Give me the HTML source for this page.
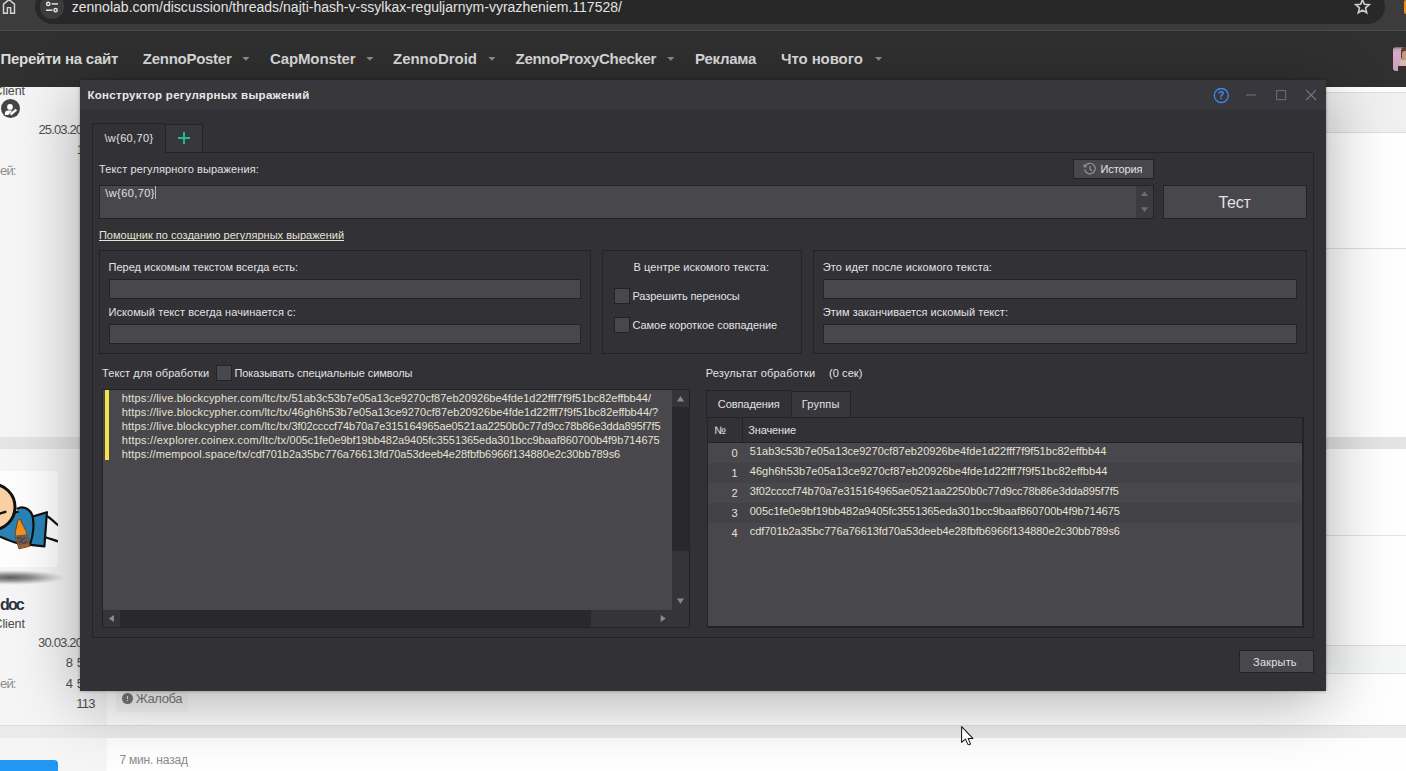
<!DOCTYPE html>
<html lang="ru">
<head>
<meta charset="utf-8">
<title>Конструктор регулярных выражений</title>
<style>
*{box-sizing:border-box;margin:0;padding:0}
html,body{width:1406px;height:771px;overflow:hidden;background:#fefefe}
body{position:relative;font-family:'Liberation Sans',sans-serif}
.a{position:absolute}
.t{position:absolute;white-space:pre;font-family:'Liberation Sans',sans-serif}
.b{position:absolute;border:1px solid #232226}
.f{position:absolute;border:1px solid #232226;background:#48474c}
svg{position:absolute;overflow:visible}
</style>
</head>
<body>

<!-- ================= page behind ================= -->
<div class="a" style="left:0;top:87px;width:107px;height:684px;background:#f5f5f5"></div>
<!-- right strip post header -->
<div class="a" style="left:1300px;top:92px;width:106px;height:41px;background:#f0f0f0;border-top:1px solid #dcdcdc;border-bottom:1px solid #dcdcdc"></div>
<div class="a" style="left:1300px;top:248px;width:106px;height:1px;background:#dedede"></div>
<div class="a" style="left:1300px;top:535px;width:106px;height:1px;background:#e2e2e2"></div>
<div class="a" style="left:1300px;top:645px;width:106px;height:29px;background:#f5f7f6;border-top:1px solid #dfdfdf;border-bottom:1px solid #dfdfdf"></div>
<!-- separator bands -->
<div class="a" style="left:0;top:437px;width:1406px;height:12px;background:#e4e4e4"></div>
<div class="a" style="left:0;top:725px;width:1406px;height:13px;background:#ebebeb;border-top:1px solid #dedede"></div>
<!-- avatar card -->
<div class="a" style="left:-38px;top:471px;width:96px;height:96px;background:#fdfdfd;border-radius:4px"></div>
<div class="a" style="left:-46px;top:570px;width:112px;height:15px;border-radius:50%;background:radial-gradient(ellipse at center,rgba(0,0,0,.62) 0%,rgba(0,0,0,.42) 28%,rgba(0,0,0,.12) 55%,rgba(0,0,0,0) 70%)"></div>
<svg style="left:0;top:471px;overflow:hidden" width="58" height="96" viewBox="0 471 58 96">
  <!-- legs -->
  <path d="M46 515.5C51 518 54 522.5 60 526.5V542C55 540.5 50 538.5 44.5 537Z" fill="#fdfdfd" stroke="#111" stroke-width="2.2"/>
  <!-- shirt -->
  <path d="M-6 520C4 520 10 516 15.5 512.5C18 510.5 24 512 33.4 516.4L46.9 512.2L44.4 546.3L30.3 544.8C22 546 10 541 -6 534Z" fill="#2a82b5" stroke="#111" stroke-width="2.2" stroke-linejoin="round"/>
  <!-- arm -->
  <path d="M17.5 508.6C22 505.6 29 508 32 514.5C34.6 522 33.6 534 30.3 543.5" fill="#2a82b5" stroke="#111" stroke-width="2.2" stroke-linecap="round"/>
  <!-- head -->
  <circle cx="-8" cy="507" r="23" fill="#f9d0a2" stroke="#111" stroke-width="3"/>
  <path d="M-3 514.6L5.4 511.8" stroke="#111" stroke-width="2.4" fill="none" stroke-linecap="round"/>
  <!-- bottle -->
  <path d="M17.6 520L20.6 519.6C21.6 524 26 529 27.3 535L29.6 546.3L19 548.8L15.4 537C14.2 531 17.6 526 17.6 520Z" fill="#f0921f" stroke="#7a4416" stroke-width="1"/>
  <path d="M15.3 535.6L27.4 534.2L29.3 545.8L19.2 548.2Z" fill="#6e5c58"/>
  <path d="M17 538.5L20 537.5L22 540L25 538M18 542.5L21 541L23.5 543.5L27 541.5" stroke="#3a2f2d" stroke-width=".9" fill="none"/>
  <path d="M18.4 545.6L28.8 543.4L29.3 545.8L19.2 548.2Z" fill="#a55f33"/>
</svg>
<!-- user icon -->
<div class="a" style="left:1px;top:98.9px;width:19.2px;height:19.2px;border-radius:50%;background:#444"></div>
<svg style="left:1px;top:98.9px" width="20" height="20" viewBox="0 0 20 20">
  <circle cx="9" cy="7.9" r="2.9" fill="#fff"/>
  <path d="M3.9 16V14.3Q3.9 11.5 7.2 11.5H11.2L7.3 16Z" fill="#fff"/>
  <path d="M9.5 15.5L15.4 10.7" stroke="#fff" stroke-width="2.3" fill="none"/>
</svg>
<!-- complaint icon -->
<div class="a" style="left:116px;top:684px;width:72px;height:28px;border-radius:3px;background:rgba(0,0,0,.022)"></div>
<div class="a" style="left:122.2px;top:693.3px;width:10.4px;height:10.4px;border-radius:50%;background:#7a7a7a"></div>
<div class="a" style="left:126.7px;top:695.5px;width:1.4px;height:3.8px;background:#f4f4f4"></div>
<div class="a" style="left:126.7px;top:700.1px;width:1.4px;height:1.4px;background:#f4f4f4"></div>
<!-- blue button -->
<div class="a" style="left:-10px;top:760px;width:68px;height:30px;border-radius:4px;background:#2196f3"></div>

<!-- ================= browser toolbar ================= -->
<div class="a" style="left:0;top:0;width:1406px;height:31px;background:#3c3c3c;border-bottom:1px solid #4a4a4a"></div>
<div class="a" style="left:35px;top:-11px;width:1350px;height:35px;border-radius:17.5px;background:#282828"></div>
<div class="a" style="left:39.6px;top:-5.8px;width:24.8px;height:24.8px;border-radius:50%;background:#3c3c3c"></div>
<!-- tune icon -->
<svg style="left:45px;top:0" width="14" height="14" viewBox="0 0 14 14" fill="none" stroke="#e3e3e3" stroke-width="1.5">
  <circle cx="3.2" cy="3.9" r="1.6"/><path d="M6.6 3.9H13"/>
  <circle cx="10.6" cy="10.2" r="1.6"/><path d="M1 10.2H7.4"/>
</svg>
<!-- home icon -->
<svg style="left:2px;top:-4px" width="14" height="19" viewBox="0 0 14 19" fill="none" stroke="#d6d6d6" stroke-width="1.45" stroke-linejoin="miter">
  <path d="M1.5 17.2V8.2L7 3.6L12.5 8.2V17.2H8.6V11.6H5.4V17.2Z"/>
</svg>
<!-- star -->
<svg style="left:1353.5px;top:-1.6px" width="17" height="17" viewBox="0 0 24 24" fill="none" stroke="#cdcdcd" stroke-width="2.3" stroke-linejoin="miter">
  <path d="M12 2.6l2.7 6.3 6.8.6-5.2 4.5 1.6 6.7L12 17.1l-5.9 3.6 1.6-6.7L2.5 9.5l6.8-.6z"/>
</svg>
<div class="a" style="left:1404px;top:0;width:4px;height:14px;border-radius:2px;background:#f08a1d"></div>

<!-- ================= site nav ================= -->
<div class="a" style="left:0;top:31px;width:1406px;height:56px;background:#303030"></div>
<svg style="left:0;top:31px" width="1406" height="56" viewBox="0 31 1406 56" fill="#8f8f8f">
  <path d="M242.3 57h7.2l-3.6 3.7z"/><path d="M366.3 57h7.2l-3.6 3.7z"/><path d="M488.3 57h7.2l-3.6 3.7z"/>
  <path d="M667.2 57h7.2l-3.6 3.7z"/><path d="M875 57h7.2l-3.6 3.7z"/>
</svg>
<div class="a" style="left:1392.7px;top:47px;width:16px;height:24px;border-radius:3px;overflow:hidden;background:linear-gradient(180deg,#7a5296 0,#b9a6b0 2px,#d9a9c6 5px,#d4a4c0 14px,#c9a0ba 24px)">
<div class="a" style="left:8px;top:0;width:8px;height:13px;border-radius:4px 0 0 3px;background:#5e3c35"></div>
<div class="a" style="left:9.4px;top:4px;width:7px;height:11px;border-radius:3px 0 0 4px;background:#c4957f"></div>
<div class="a" style="left:7px;top:13px;width:9px;height:7px;border-radius:3px 0 0 0;background:#d6bcae"></div>
<div class="a" style="left:5.4px;top:19px;width:11px;height:5px;background:#3d2a33"></div>
</div>

<span class="t" style="left:71.7px;top:-2.00px;font-size:14px;line-height:18px;color:#e3e3e3;letter-spacing:0.014px;">zennolab.com/discussion/threads/najti-hash-v-ssylkax-reguljarnym-vyrazheniem.117528/</span>
<span class="t" style="left:0.5px;top:49.00px;font-size:15px;line-height:20px;color:#dcdcdc;letter-spacing:-0.273px;font-weight:700;">Перейти на сайт</span>
<span class="t" style="left:142.8px;top:49.00px;font-size:15px;line-height:20px;color:#dcdcdc;letter-spacing:-0.272px;font-weight:700;">ZennoPoster</span>
<span class="t" style="left:270.0px;top:49.00px;font-size:15px;line-height:20px;color:#dcdcdc;letter-spacing:-0.119px;font-weight:700;">CapMonster</span>
<span class="t" style="left:393.0px;top:49.00px;font-size:15px;line-height:20px;color:#dcdcdc;letter-spacing:-0.016px;font-weight:700;">ZennoDroid</span>
<span class="t" style="left:515.6px;top:49.00px;font-size:15px;line-height:20px;color:#dcdcdc;letter-spacing:-0.323px;font-weight:700;">ZennoProxyChecker</span>
<span class="t" style="left:695.0px;top:49.00px;font-size:15px;line-height:20px;color:#dcdcdc;letter-spacing:-0.254px;font-weight:700;">Реклама</span>
<span class="t" style="left:781.0px;top:49.00px;font-size:15px;line-height:20px;color:#dcdcdc;letter-spacing:-0.094px;font-weight:700;">Что нового</span>
<span class="t" style="left:-6.5px;top:83.00px;font-size:12.5px;line-height:16px;color:#4a4a4a;letter-spacing:-0.078px;">Client</span>
<span class="t" style="left:38.4px;top:121.00px;font-size:13px;line-height:17px;color:#505050;letter-spacing:-0.848px;">25.03.2025</span>
<span class="t" style="left:76.8px;top:141.00px;font-size:13px;line-height:17px;color:#505050;letter-spacing:0.366px;">12</span>
<span class="t" style="left:0.0px;top:162.00px;font-size:13px;line-height:17px;color:#8c8c8c;letter-spacing:-0.836px;">ей:</span>
<span class="t" style="left:0.0px;top:594.00px;font-size:16px;line-height:21px;color:#2b3440;letter-spacing:-1.884px;font-weight:700;">doc</span>
<span class="t" style="left:-6.5px;top:616.00px;font-size:12.5px;line-height:16px;color:#4a4a4a;letter-spacing:-0.111px;">Client</span>
<span class="t" style="left:38.0px;top:634.00px;font-size:13px;line-height:17px;color:#505050;letter-spacing:-0.808px;">30.03.2015</span>
<span class="t" style="left:65.7px;top:654.00px;font-size:13px;line-height:17px;color:#505050;letter-spacing:0.074px;">8 5</span>
<span class="t" style="left:0.0px;top:675.00px;font-size:13px;line-height:17px;color:#8c8c8c;letter-spacing:-0.836px;">ей:</span>
<span class="t" style="left:65.7px;top:675.00px;font-size:13px;line-height:17px;color:#505050;letter-spacing:0.074px;">4 5</span>
<span class="t" style="left:76.3px;top:695.00px;font-size:13px;line-height:17px;color:#505050;letter-spacing:-0.811px;">113</span>
<span class="t" style="left:135.8px;top:690.00px;font-size:13px;line-height:17px;color:#7d7d7d;letter-spacing:-0.403px;">Жалоба</span>
<span class="t" style="left:119.4px;top:752.00px;font-size:12px;line-height:16px;color:#8c8c8c;letter-spacing:-0.184px;">7 мин. назад</span>

<!-- ================= dialog ================= -->
<div class="a" style="left:80px;top:80px;width:1246px;height:611px;background:#323136;box-shadow:0 10px 60px rgba(0,0,0,.33),0 0 3px rgba(0,0,0,.35)"></div>
<div class="a" style="left:80px;top:80px;width:1246px;height:30px;background:#38373c"></div>
<!-- title buttons -->
<svg style="left:1210px;top:84px" width="112" height="24" viewBox="1210 84 112 24" fill="none">
  <circle cx="1221.3" cy="95.5" r="7" stroke="#4385f5" stroke-width="1.3"/>
  <text x="1221.3" y="99.3" font-family="'Liberation Sans',sans-serif" font-size="10.5" font-weight="700" fill="#4385f5" text-anchor="middle">?</text>
  <path d="M1246 95h10" stroke="#5d6880" stroke-width="1.2"/>
  <rect x="1276.6" y="90.6" width="9" height="9" stroke="#5d6880" stroke-width="1.2"/>
  <path d="M1306.2 90.2l9.8 9.8M1316 90.2l-9.8 9.8" stroke="#6d7a98" stroke-width="1.1"/>
</svg>

<!-- main panel + tabs -->
<div class="b" style="left:92px;top:152px;width:1222px;height:486px"></div>
<div class="b" style="left:165px;top:124px;width:38px;height:29px;background:#38373c"></div>
<div class="b" style="left:92px;top:123px;width:74px;height:30px;border-bottom:none;background:#323136"></div>
<div class="a" style="left:178px;top:137px;width:12.2px;height:2px;background:#25b89a"></div>
<div class="a" style="left:183px;top:132px;width:2px;height:12.2px;background:#25b89a"></div>

<!-- history button -->
<div class="f" style="left:1073px;top:159px;width:81px;height:20px"></div>
<svg style="left:1083px;top:162.4px" width="14" height="14" viewBox="0 0 14 14" fill="none" stroke="#9a999f" stroke-width="1.1">
  <path d="M2.2 4.2A5.3 5.3 0 1 1 1.7 7.4"/>
  <path d="M1.2 2.2v2.6h2.6" />
  <path d="M7 4v3.3l2 1.4"/>
</svg>

<!-- regex input -->
<div class="f" style="left:99px;top:185px;width:1055px;height:34px"></div>
<div class="a" style="left:1136px;top:186px;width:17px;height:32px;background:#3c3b40"></div>
<svg style="left:1136px;top:186px" width="17" height="32" viewBox="1136 186 17 32" fill="#6e6d73">
  <path d="M1141 196.1h7l-3.5-4.9z"/><path d="M1141 207.2h7l-3.5 4.9z"/>
</svg>
<div class="a" style="left:155px;top:186px;width:1px;height:13px;background:#b8b8b8"></div>
<div class="a" style="left:99px;top:240px;width:245px;height:1px;background:#e6e3d3"></div>
<!-- test button -->
<div class="f" style="left:1163px;top:185px;width:144px;height:34px"></div>

<!-- group boxes -->
<div class="b" style="left:99px;top:250px;width:492px;height:104px"></div>
<div class="b" style="left:602px;top:250px;width:200px;height:104px"></div>
<div class="b" style="left:813px;top:250px;width:494px;height:104px"></div>
<div class="f" style="left:109px;top:279px;width:472px;height:20px"></div>
<div class="f" style="left:109px;top:324px;width:472px;height:20px"></div>
<div class="f" style="left:823px;top:279px;width:474px;height:20px"></div>
<div class="f" style="left:823px;top:324px;width:474px;height:20px"></div>
<div class="f" style="left:614px;top:288px;width:16px;height:16px"></div>
<div class="f" style="left:614px;top:317px;width:16px;height:16px"></div>
<div class="f" style="left:216px;top:365px;width:16px;height:16px"></div>

<!-- text area -->
<div class="f" style="left:102px;top:389px;width:588px;height:239px"></div>
<div class="a" style="left:105px;top:390px;width:4px;height:70px;background:#f6e24b"></div>
<!-- v scrollbar -->
<div class="a" style="left:672px;top:390px;width:17px;height:237px;background:#353439"></div>
<div class="a" style="left:672px;top:407px;width:17px;height:144px;background:#29282c"></div>
<!-- h scrollbar -->
<div class="a" style="left:103px;top:610px;width:569px;height:17px;background:#353439"></div>
<div class="a" style="left:120px;top:610px;width:471px;height:17px;background:#29282c"></div>
<svg style="left:102px;top:389px" width="588" height="239" viewBox="102 389 588 239" fill="#8a8990">
  <path d="M677 401.4h7l-3.5-5.4z"/>
  <path d="M677 598.4h7l-3.5 5.4z"/>
  <path d="M114 615v7l-5.2-3.5z"/>
  <path d="M660.6 615v7l5.2-3.5z"/>
</svg>

<!-- results -->
<div class="b" style="left:791px;top:391px;width:60px;height:27px;background:#38373c"></div>
<div class="b" style="left:706px;top:390px;width:86px;height:28px;border-bottom:none;background:#323136"></div>
<div class="f" style="left:707px;top:417px;width:597px;height:211px;border-right-width:2px;border-bottom-width:2px"></div>
<div class="a" style="left:708px;top:418px;width:594px;height:25px;background:#323136;border-bottom:1px solid #232226"></div>
<div class="a" style="left:742px;top:418px;width:1px;height:25px;background:#232226"></div>
<div class="a" style="left:708px;top:463px;width:594px;height:20px;background:#434247"></div>
<div class="a" style="left:708px;top:503px;width:594px;height:20px;background:#434247"></div>

<!-- close button -->
<div class="f" style="left:1239px;top:650px;width:75px;height:23px"></div>

<span class="t" style="left:87.4px;top:88.00px;font-size:11.5px;line-height:15px;color:#e8e8e8;letter-spacing:0.306px;font-weight:700;">Конструктор регулярных выражений</span>
<span class="t" style="left:104.4px;top:131.00px;font-size:11px;line-height:14px;color:#e2e2e4;letter-spacing:0.358px;">\w{60,70}</span>
<span class="t" style="left:99.0px;top:162.00px;font-size:11px;line-height:14px;color:#e2e2e4;letter-spacing:0.122px;">Текст регулярного выражения:</span>
<span class="t" style="left:1100.5px;top:162.00px;font-size:11px;line-height:14px;color:#e2e2e4;letter-spacing:-0.096px;">История</span>
<span class="t" style="left:105.2px;top:186.00px;font-size:11px;line-height:14px;color:#e2e2e4;letter-spacing:0.425px;">\w{60,70}</span>
<span class="t" style="left:1218.5px;top:192.00px;font-size:16px;line-height:21px;color:#e2e2e4;letter-spacing:-0.277px;">Тест</span>
<span class="t" style="left:98.9px;top:228.00px;font-size:11px;line-height:14px;color:#e6e3d3;letter-spacing:0.009px;">Помощник по созданию регулярных выражений</span>
<span class="t" style="left:108.5px;top:260.00px;font-size:11px;line-height:14px;color:#e2e2e4;letter-spacing:0.006px;">Перед искомым текстом всегда есть:</span>
<span class="t" style="left:108.5px;top:305.00px;font-size:11px;line-height:14px;color:#e2e2e4;letter-spacing:0.07px;">Искомый текст всегда начинается с:</span>
<span class="t" style="left:633.6px;top:260.00px;font-size:11px;line-height:14px;color:#e2e2e4;letter-spacing:0.057px;">В центре искомого текста:</span>
<span class="t" style="left:632.5px;top:289.00px;font-size:11px;line-height:14px;color:#e2e2e4;letter-spacing:-0.103px;">Разрешить переносы</span>
<span class="t" style="left:632.5px;top:318.00px;font-size:11px;line-height:14px;color:#e2e2e4;letter-spacing:-0.048px;">Самое короткое совпадение</span>
<span class="t" style="left:822.8px;top:260.00px;font-size:11px;line-height:14px;color:#e2e2e4;letter-spacing:0.089px;">Это идет после искомого текста:</span>
<span class="t" style="left:822.8px;top:305.00px;font-size:11px;line-height:14px;color:#e2e2e4;letter-spacing:0.038px;">Этим заканчивается искомый текст:</span>
<span class="t" style="left:102.0px;top:366.00px;font-size:11px;line-height:14px;color:#e2e2e4;letter-spacing:0.093px;">Текст для обработки</span>
<span class="t" style="left:234.4px;top:366.00px;font-size:11px;line-height:14px;color:#e2e2e4;letter-spacing:-0.067px;">Показывать специальные символы</span>
<span class="t" style="left:705.7px;top:366.00px;font-size:11px;line-height:14px;color:#e2e2e4;letter-spacing:0.194px;">Результат обработки</span>
<span class="t" style="left:829.0px;top:366.00px;font-size:11px;line-height:14px;color:#e2e2e4;letter-spacing:0.08px;">(0 сек)</span>
<span class="t" style="left:121.8px;top:391.00px;font-size:11px;line-height:14px;color:#e6e3d3;letter-spacing:0.177px;">https://live.blockcypher.com/ltc/tx/</span>
<span class="t" style="left:291.4px;top:391.00px;font-size:11px;line-height:14px;color:#e6e3d3;letter-spacing:0.029px;">51ab3c53b7e05a13ce9270cf87eb20926be4fde1d22fff7f9f51bc82effbb44</span>
<span class="t" style="left:648.0px;top:391.00px;font-size:11px;line-height:14px;color:#e6e3d3;letter-spacing:1.037px;">/</span>
<span class="t" style="left:121.8px;top:405.00px;font-size:11px;line-height:14px;color:#e6e3d3;letter-spacing:0.177px;">https://live.blockcypher.com/ltc/tx/</span>
<span class="t" style="left:291.4px;top:405.00px;font-size:11px;line-height:14px;color:#e6e3d3;letter-spacing:0.036px;">46gh6h53b7e05a13ce9270cf87eb20926be4fde1d22fff7f9f51bc82effbb44</span>
<span class="t" style="left:649.1px;top:405.00px;font-size:11px;line-height:14px;color:#e6e3d3;letter-spacing:-0.144px;">/?</span>
<span class="t" style="left:121.8px;top:419.00px;font-size:11px;line-height:14px;color:#e6e3d3;letter-spacing:0.177px;">https://live.blockcypher.com/ltc/tx/</span>
<span class="t" style="left:291.4px;top:419.00px;font-size:11px;line-height:14px;color:#e6e3d3;letter-spacing:-0.09px;">3f02ccccf74b70a7e315164965ae0521aa2250b0c77d9cc78b86e3dda895f7f5</span>
<span class="t" style="left:121.8px;top:433.00px;font-size:11px;line-height:14px;color:#e6e3d3;letter-spacing:0.235px;">https://explorer.coinex.com/ltc/tx/</span>
<span class="t" style="left:289.6px;top:433.00px;font-size:11px;line-height:14px;color:#e6e3d3;letter-spacing:-0.059px;">005c1fe0e9bf19bb482a9405fc3551365eda301bcc9baaf860700b4f9b714675</span>
<span class="t" style="left:121.8px;top:447.00px;font-size:11px;line-height:14px;color:#e6e3d3;letter-spacing:0.122px;">https://mempool.space/tx/</span>
<span class="t" style="left:250.2px;top:447.00px;font-size:11px;line-height:14px;color:#e6e3d3;letter-spacing:-0.059px;">cdf701b2a35bc776a76613fd70a53deeb4e28fbfb6966f134880e2c30bb789s6</span>
<span class="t" style="left:717.8px;top:397.00px;font-size:11px;line-height:14px;color:#e2e2e4;letter-spacing:-0.08px;">Совпадения</span>
<span class="t" style="left:801.7px;top:397.00px;font-size:11px;line-height:14px;color:#e2e2e4;letter-spacing:0.224px;">Группы</span>
<span class="t" style="left:714.2px;top:423.00px;font-size:11px;line-height:14px;color:#e2e2e4;letter-spacing:0.987px;">№</span>
<span class="t" style="left:748.3px;top:423.00px;font-size:11px;line-height:14px;color:#e2e2e4;letter-spacing:-0.135px;">Значение</span>
<span class="t" style="left:731.6px;top:446.00px;font-size:11px;line-height:14px;color:#e6e3d3;letter-spacing:0.175px;">0</span>
<span class="t" style="left:749.8px;top:444.00px;font-size:11px;line-height:14px;color:#e6e3d3;letter-spacing:0.029px;">51ab3c53b7e05a13ce9270cf87eb20926be4fde1d22fff7f9f51bc82effbb44</span>
<span class="t" style="left:731.6px;top:466.00px;font-size:11px;line-height:14px;color:#e6e3d3;letter-spacing:0.175px;">1</span>
<span class="t" style="left:749.8px;top:464.00px;font-size:11px;line-height:14px;color:#e6e3d3;letter-spacing:0.036px;">46gh6h53b7e05a13ce9270cf87eb20926be4fde1d22fff7f9f51bc82effbb44</span>
<span class="t" style="left:731.6px;top:486.00px;font-size:11px;line-height:14px;color:#e6e3d3;letter-spacing:0.175px;">2</span>
<span class="t" style="left:749.8px;top:484.00px;font-size:11px;line-height:14px;color:#e6e3d3;letter-spacing:-0.093px;">3f02ccccf74b70a7e315164965ae0521aa2250b0c77d9cc78b86e3dda895f7f5</span>
<span class="t" style="left:731.6px;top:506.00px;font-size:11px;line-height:14px;color:#e6e3d3;letter-spacing:0.175px;">3</span>
<span class="t" style="left:749.8px;top:504.00px;font-size:11px;line-height:14px;color:#e6e3d3;letter-spacing:-0.057px;">005c1fe0e9bf19bb482a9405fc3551365eda301bcc9baaf860700b4f9b714675</span>
<span class="t" style="left:731.6px;top:526.00px;font-size:11px;line-height:14px;color:#e6e3d3;letter-spacing:0.175px;">4</span>
<span class="t" style="left:749.8px;top:524.00px;font-size:11px;line-height:14px;color:#e6e3d3;letter-spacing:-0.057px;">cdf701b2a35bc776a76613fd70a53deeb4e28fbfb6966f134880e2c30bb789s6</span>
<span class="t" style="left:1253.1px;top:655.00px;font-size:11px;line-height:14px;color:#e2e2e4;letter-spacing:0.189px;">Закрыть</span>

<!-- mouse cursor -->
<svg style="left:955px;top:720px" width="24" height="30" viewBox="955 720 24 30">
  <path d="M961.6 726.6V742.3L965.4 739.1L967.9 744.4Q969.3 745.2 970.5 743.9L968.1 738.4H972.9Z" fill="#fff" stroke="#14141f" stroke-width="1.05" stroke-linejoin="round"/>
</svg>
</body>
</html>
